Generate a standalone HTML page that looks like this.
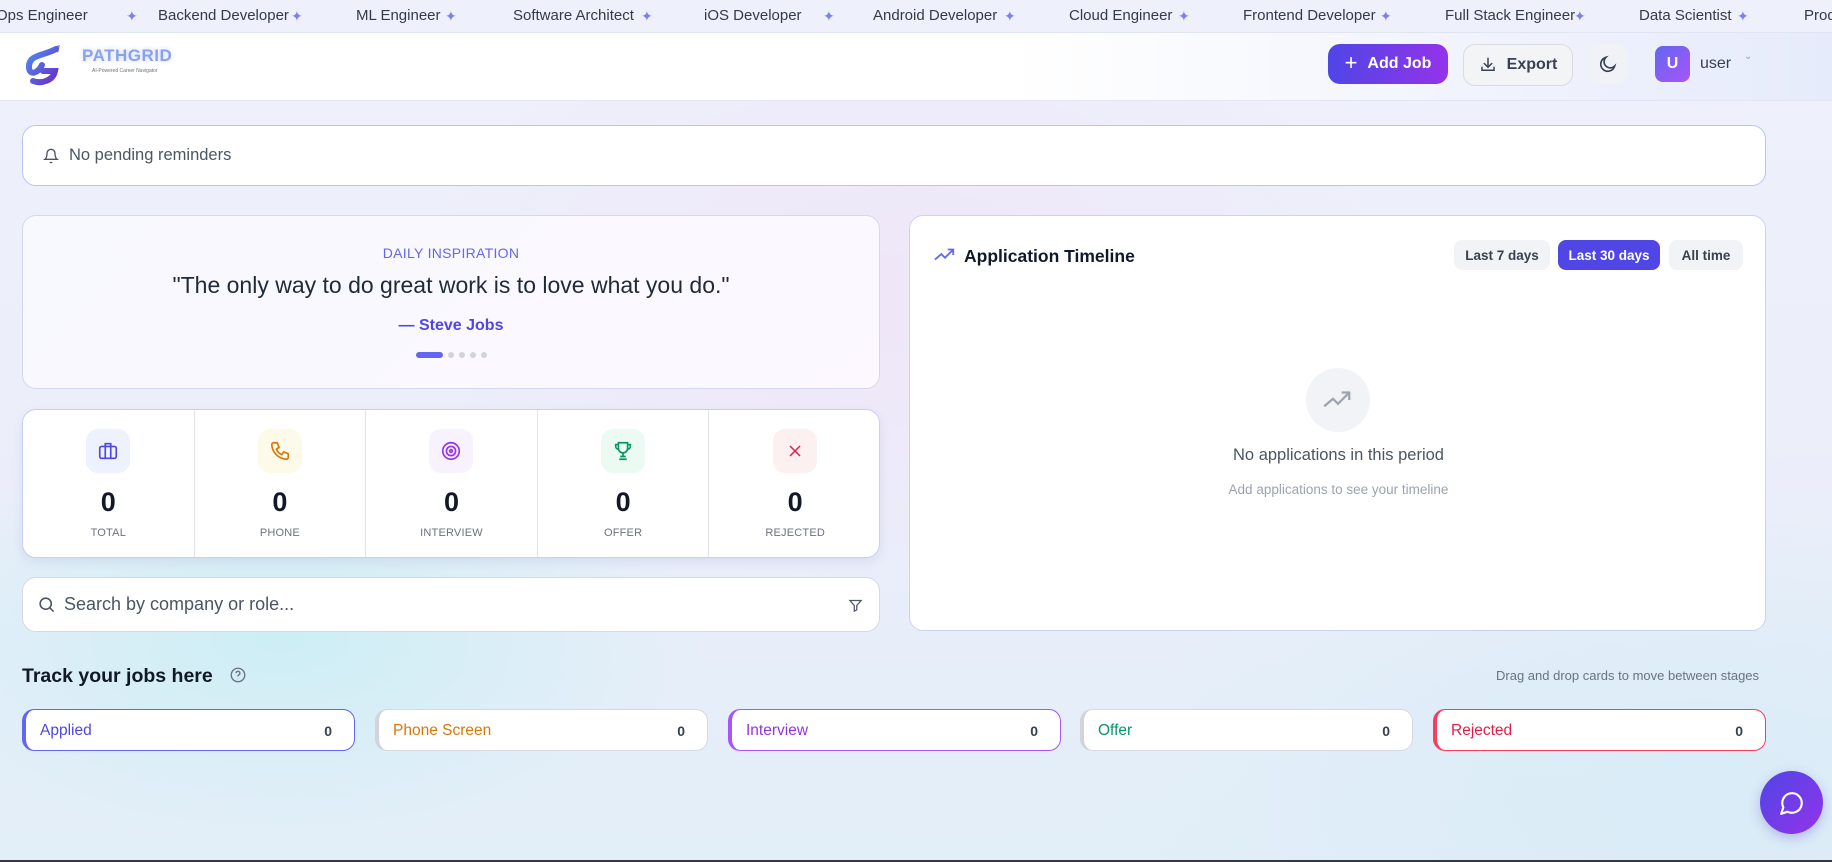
<!DOCTYPE html>
<html><head><meta charset="utf-8"><style>
*{box-sizing:border-box;margin:0;padding:0}
body{width:1832px;height:862px;overflow:hidden;font-family:"Liberation Sans",sans-serif;position:relative;
background:radial-gradient(ellipse 420px 200px at 280px 640px,#cdeef5 0%,rgba(205,238,245,0) 100%),
radial-gradient(ellipse 600px 300px at 1700px 800px,#d9ecf7 0%,rgba(217,236,247,0) 100%),
radial-gradient(ellipse 500px 300px at 900px 300px,#efe6f8 0%,rgba(239,230,248,0) 100%),
linear-gradient(180deg,#eef0fb 0%,#eceefa 50%,#e2eef8 100%);}
.abs{position:absolute}
.ticker{left:0;top:0;width:1832px;height:33px;background:#eef0fb;border-bottom:1px solid #e1e4f3;font-size:15px;color:#333a4a;overflow:hidden}
.ticker span{position:absolute;top:7px;white-space:nowrap}
.ticker .st{color:#7c7ff0;font-size:14px;top:8px}
.header{left:0;top:33px;width:1832px;height:68px;background:linear-gradient(90deg,#fff 0%,#fff 55%,#e6ebfb 100%);border-bottom:1px solid #e4e6f4}
.card{background:#fff;border-radius:14px;position:absolute}
.btn{position:absolute;border-radius:12px;display:flex;align-items:center;justify-content:center;font-weight:bold;font-size:16px}
.stat{position:absolute;top:0;width:171.6px;height:149px;text-align:center;border-right:1px solid #e2e5ee}
.stat .ic{width:44px;height:44px;border-radius:12px;margin:19px auto 0;display:flex;align-items:center;justify-content:center}
.stat .n{font-size:27px;font-weight:bold;color:#121826;margin-top:14px}
.stat .l{font-size:11px;color:#6b7280;margin-top:9px;letter-spacing:.2px}
.col{position:absolute;top:709px;height:42px;width:333px;background:#fff;border-radius:12px;display:flex;align-items:center;justify-content:space-between;padding:2px 22px 0 14px;font-size:15.5px}
.col b{color:#374151;font-size:14px}
.pill{position:absolute;top:240px;height:30px;border-radius:8px;font-size:13.5px;font-weight:bold;display:flex;align-items:center;justify-content:center;background:#f2f3f6;color:#374151}
</style></head><body>
<div class="abs ticker">
<span style="left:-4px">Ops Engineer</span><span class="st" style="left:126px">✦</span>
<span style="left:158px">Backend Developer</span><span class="st" style="left:291px">✦</span>
<span style="left:356px">ML Engineer</span><span class="st" style="left:445px">✦</span>
<span style="left:513px">Software Architect</span><span class="st" style="left:641px">✦</span>
<span style="left:704px">iOS Developer</span><span class="st" style="left:823px">✦</span>
<span style="left:873px">Android Developer</span><span class="st" style="left:1004px">✦</span>
<span style="left:1069px">Cloud Engineer</span><span class="st" style="left:1178px">✦</span>
<span style="left:1243px">Frontend Developer</span><span class="st" style="left:1380px">✦</span>
<span style="left:1445px">Full Stack Engineer</span><span class="st" style="left:1574px">✦</span>
<span style="left:1639px">Data Scientist</span><span class="st" style="left:1737px">✦</span>
<span style="left:1804px">Prod</span>
</div>
<div class="abs header">
<svg class="abs" style="left:22px;top:9px" width="40" height="46" viewBox="0 0 40 46"><defs><linearGradient id="lg" x1="0" y1="0" x2="1" y2="1"><stop offset="0" stop-color="#4f8cf0"/><stop offset="1" stop-color="#6a2fc8"/></linearGradient></defs>
<path d="M31 5 L38 3 L36 11 Z" fill="#6a8cf5"/><path d="M34 7 C22 14 6 12 7 26 C8 34 16 31 20 23 M11 39 C19 42 31 39 33 29 L21 29" stroke="url(#lg)" stroke-width="6" fill="none" stroke-linecap="round"/></svg>
<div class="abs" style="left:82px;top:13px;font-size:17px;font-weight:bold;color:#8aa2e8;letter-spacing:.5px;text-shadow:0 0 6px #c8d4ff">PATHGRID</div>
<div class="abs" style="left:92px;top:35px;font-size:5px;color:#6b7280">AI-Powered Career Navigator</div>
<div class="btn" style="left:1328px;top:11px;width:120px;height:40px;background:linear-gradient(90deg,#4f46e5,#9333ea);color:#fff"><span style="font-size:22px;font-weight:normal;margin-right:10px;margin-top:-3px">+</span>Add Job</div>
<div class="btn" style="left:1463px;top:11px;width:110px;height:42px;background:#f3f4f6;border:1px solid #d8dbe2;color:#374151;font-weight:bold">
<svg width="18" height="18" viewBox="0 0 24 24" fill="none" stroke="#374151" stroke-width="2" stroke-linecap="round" style="margin-right:10px"><path d="M4 15v4h16v-4M12 3v12M7 10l5 5 5-5"/></svg>Export</div>
<div class="btn" style="left:1588px;top:11px;width:40px;height:40px;background:#f0f2f7">
<svg width="20" height="20" viewBox="0 0 24 24" fill="none" stroke="#374151" stroke-width="2"><path d="M20 14.5A8.5 8.5 0 1 1 9.5 4 7 7 0 0 0 20 14.5z"/></svg></div>
<div class="btn" style="left:1655px;top:13px;width:35px;height:36px;background:linear-gradient(135deg,#6366f1,#a855f7);color:#fff;border-radius:8px;font-size:16px">U</div>
<div class="abs" style="left:1700px;top:22px;font-size:16px;color:#374151">user</div>
<div class="abs" style="left:1744px;top:18px;font-size:10px;color:#9ca3af">⌄</div>
</div>
<div class="card" style="left:22px;top:125px;width:1744px;height:61px;border:1.5px solid #b8c4f6;display:flex;align-items:center;padding-left:20px;font-size:16.5px;color:#4b5563">
<svg width="16" height="18" viewBox="0 0 24 24" fill="none" stroke="#4b5563" stroke-width="2" style="margin-right:10px"><path d="M6 8a6 6 0 0 1 12 0c0 7 3 9 3 9H3s3-2 3-9M10.3 21a1.9 1.9 0 0 0 3.4 0"/></svg>No pending reminders</div>
<div class="card" style="left:22px;top:215px;width:858px;height:174px;border:1.5px solid #d4d8ee;background:linear-gradient(135deg,#f8f8ff,#fdf8ff);text-align:center">
<div style="margin-top:29px;font-size:14px;color:#6366f1;letter-spacing:.3px">DAILY INSPIRATION</div>
<div style="margin-top:11px;font-size:23px;color:#1f2937">"The only way to do great work is to love what you do."</div>
<div style="margin-top:18px;font-size:16px;font-weight:bold;color:#4f46e5">— Steve Jobs</div>
<div style="margin-top:17px;display:flex;justify-content:center;gap:5px;align-items:center"><i style="width:27px;height:6px;border-radius:3px;background:#6366f1"></i><i style="width:6px;height:6px;border-radius:3px;background:#d1d5db"></i><i style="width:6px;height:6px;border-radius:3px;background:#d1d5db"></i><i style="width:6px;height:6px;border-radius:3px;background:#d1d5db"></i><i style="width:6px;height:6px;border-radius:3px;background:#d1d5db"></i></div>
</div>
<div class="card" style="left:22px;top:409px;width:858px;height:149px;border:1.5px solid #c8cff6;box-shadow:0 4px 10px rgba(100,110,160,.12);overflow:hidden">
<div class="stat" style="left:0"><div class="ic" style="background:#eef1fe"><svg width="22" height="22" viewBox="0 0 24 24" fill="none" stroke="#4f46e5" stroke-width="1.8"><rect x="3" y="7" width="18" height="13" rx="2"/><path d="M9 7V4h6v3M9 7v13M15 7v13"/></svg></div><div class="n">0</div><div class="l">TOTAL</div></div>
<div class="stat" style="left:171.6px"><div class="ic" style="background:#fefaea"><svg width="22" height="22" viewBox="0 0 24 24" fill="none" stroke="#d97706" stroke-width="1.8"><path d="M5 3h4l2 5-3 2a11 11 0 0 0 6 6l2-3 5 2v4a2 2 0 0 1-2 2A17 17 0 0 1 3 5a2 2 0 0 1 2-2"/></svg></div><div class="n">0</div><div class="l">PHONE</div></div>
<div class="stat" style="left:343.2px"><div class="ic" style="background:#f8f2fe"><svg width="22" height="22" viewBox="0 0 24 24" fill="none" stroke="#9333ea" stroke-width="1.8"><circle cx="12" cy="12" r="9"/><circle cx="12" cy="12" r="5"/><circle cx="12" cy="12" r="1.5"/></svg></div><div class="n">0</div><div class="l">INTERVIEW</div></div>
<div class="stat" style="left:514.8px"><div class="ic" style="background:#ebfaf2"><svg width="22" height="22" viewBox="0 0 24 24" fill="none" stroke="#059669" stroke-width="1.8"><path d="M7 3h10v6a5 5 0 0 1-10 0zM7 5H4v2a3 3 0 0 0 3 3M17 5h3v2a3 3 0 0 1-3 3M12 14v4M8 21h8M9 18h6"/></svg></div><div class="n">0</div><div class="l">OFFER</div></div>
<div class="stat" style="left:686.4px;border-right:none"><div class="ic" style="background:#fdf0f1"><svg width="20" height="20" viewBox="0 0 24 24" fill="none" stroke="#e11d48" stroke-width="1.8"><path d="M6 6l12 12M18 6L6 18"/></svg></div><div class="n">0</div><div class="l">REJECTED</div></div>
</div>
<div class="card" style="left:22px;top:577px;width:858px;height:55px;border:1px solid #d6d9e3;display:flex;align-items:center;padding-left:14px;font-size:18px;color:#4b5563">
<svg width="19" height="19" viewBox="0 0 24 24" fill="none" stroke="#4b5563" stroke-width="2" style="margin-right:8px"><circle cx="11" cy="11" r="7"/><path d="M16 16l5 5"/></svg>Search by company or role...
<svg class="abs" style="right:16px;top:20px" width="15" height="15" viewBox="0 0 24 24" fill="none" stroke="#4b5563" stroke-width="2"><path d="M3 4h18l-7 8v7l-4 2v-9z"/></svg></div>
<div class="card" style="left:909px;top:215px;width:857px;height:416px;border:1.5px solid #ccd2f2">
<svg class="abs" style="left:24px;top:31px" width="22" height="16" viewBox="0 0 24 16" fill="none" stroke="#6366f1" stroke-width="2"><path d="M1 13l7-6 4 4 9-9M15 2h6v6"/></svg>
<div class="abs" style="left:54px;top:30px;font-size:17.5px;color:#111827;font-weight:bold">Application Timeline</div>
<div class="pill" style="left:544px;top:24px;width:96px">Last 7 days</div>
<div class="pill" style="left:648px;top:24px;width:102px;background:#4f46e5;color:#fff">Last 30 days</div>
<div class="pill" style="left:759px;top:24px;width:74px">All time</div>
<div class="abs" style="left:396px;top:152px;width:64px;height:64px;border-radius:50%;background:#f2f3f6;display:flex;align-items:center;justify-content:center"><svg width="30" height="20" viewBox="0 0 24 16" fill="none" stroke="#9ca3af" stroke-width="1.8"><path d="M1 13l7-6 4 4 9-9M15 2h6v6"/></svg></div>
<div class="abs" style="left:0;width:857px;top:230px;text-align:center;font-size:16.5px;color:#4b5563">No applications in this period</div>
<div class="abs" style="left:0;width:857px;top:266px;text-align:center;font-size:13.5px;color:#9ca3af">Add applications to see your timeline</div>
</div>
<div class="abs" style="left:22px;top:665px;font-size:19.5px;font-weight:bold;color:#111827">Track your jobs here</div>
<svg class="abs" style="left:229px;top:666px" width="18" height="18" viewBox="0 0 24 24" fill="none" stroke="#6b7280" stroke-width="1.8"><circle cx="12" cy="12" r="9"/><path d="M9.5 9.5a2.5 2.5 0 1 1 3.5 2.3c-.6.3-1 .8-1 1.5V14M12 17.2v.3"/></svg>
<div class="abs" style="left:1496px;top:668px;font-size:13px;color:#6b7280">Drag and drop cards to move between stages</div>
<div class="col" style="left:22px;border:1.5px solid #6366f1;border-left:4px solid #6366f1;color:#4f46e5">Applied<b>0</b></div>
<div class="col" style="left:375px;border:1.5px solid #d6d9e3;border-left:4px solid #d1d5db;color:#d97706">Phone Screen<b>0</b></div>
<div class="col" style="left:728px;border:1.5px solid #a855f7;border-left:4px solid #a855f7;color:#9333ea">Interview<b>0</b></div>
<div class="col" style="left:1080px;border:1.5px solid #d6d9e3;border-left:4px solid #d1d5db;color:#059669">Offer<b>0</b></div>
<div class="col" style="left:1433px;border:1.5px solid #f43f5e;border-left:4px solid #f43f5e;color:#e11d48">Rejected<b>0</b></div>
<div class="abs" style="left:1760px;top:771px;width:63px;height:63px;border-radius:50%;background:linear-gradient(135deg,#4f46e5,#9333ea);box-shadow:0 4px 12px rgba(90,60,200,.3);display:flex;align-items:center;justify-content:center">
<svg width="26" height="26" viewBox="0 0 24 24" fill="none" stroke="#fff" stroke-width="2" stroke-linejoin="round"><path d="M7.9 20A9 9 0 1 0 4 16.1L2 22z"/></svg></div>
<div class="abs" style="left:0;top:860px;width:1832px;height:2px;background:#3b3442"></div>
</body></html>
